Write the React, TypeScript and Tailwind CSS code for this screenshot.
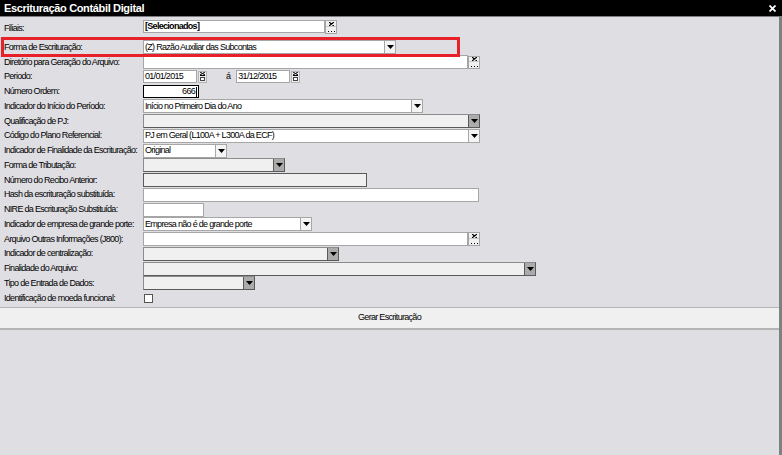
import React from 'react';

const lbl = "text-[9px] tracking-[-0.7px] text-black leading-none whitespace-nowrap";

const Arrow = () => (
  <svg width="7" height="4" viewBox="0 0 7 4">
    <path d="M0 0h7L3.5 4z" fill="#000" />
  </svg>
);

const Row: React.FC<{ label: string; children?: React.ReactNode }> = ({ label, children }) => (
  <div className="flex items-center h-[14.75px]">
    <div className={`w-[143px] pl-[4px] ${lbl}`}>{label}</div>
    <div className="flex items-center">{children}</div>
  </div>
);

const Select: React.FC<{ w: string; value?: string; disabled?: boolean }> = ({ w, value, disabled }) =>
  disabled ? (
    <div className={`flex h-[14px] border border-[#8c8c8c] border-b-[#5a5a5a] border-r-[#5a5a5a] bg-[#f0f0f0] ${w}`}>
      <div className="flex-1" />
      <div className="w-[11px] bg-[#ababab] border-l border-[#5a5a5a] flex items-center justify-center">
        <Arrow />
      </div>
    </div>
  ) : (
    <div className={`flex h-[14px] border border-[#a6a6a6] bg-white ${w}`}>
      <div className={`flex-1 pl-[1px] flex items-center ${lbl}`}>{value}</div>
      <div className="w-[11px] bg-[#f4f4f4] border-l border-[#a6a6a6] flex items-center justify-center">
        <Arrow />
      </div>
    </div>
  );

const Input: React.FC<{ w: string; value?: string; disabled?: boolean }> = ({ w, value, disabled }) => (
  <div
    className={`h-[14px] flex items-center pl-[1px] border ${w} ${
      disabled ? 'bg-[#f0f0f0] border-[#5a5a5a]' : 'bg-white border-[#a6a6a6]'
    } ${lbl}`}
  >
    {value}
  </div>
);

const PickBtn: React.FC<{ h: string }> = ({ h }) => (
  <div className={`w-[12px] ${h} border border-[#a6a6a6] bg-[#f0f0f0] flex flex-col`}>
    <div className="flex-1 flex items-center justify-center border-b border-[#c8c8c8]">
      <svg width="5" height="4" viewBox="0 0 5 4">
        <path d="M0 0l5 4M5 0L0 4" stroke="#000" strokeWidth="1.2" />
      </svg>
    </div>
    <div className="flex-1 flex items-end justify-center pb-[1px]">
      <svg width="7" height="1" viewBox="0 0 7 1">
        <path d="M0 0h1v1H0zM3 0h1v1H3zM6 0h1v1H6z" fill="#000" />
      </svg>
    </div>
  </div>
);

const DateBox: React.FC<{ value: string }> = ({ value }) => (
  <div className="flex items-center">
    <div className={`w-[54px] h-[13px] border border-[#a6a6a6] bg-white flex items-center pl-[1px] ${lbl}`}>{value}</div>
    <div className="w-[9px] h-[12px] ml-[1px] border border-[#b4b4b4] bg-[#ececec] flex flex-col items-center justify-center gap-[1px]">
      <svg width="5" height="4" viewBox="0 0 5 4">
        <path d="M0 0l5 3M5 0L0 3M0 3.5h5" stroke="#000" strokeWidth="1" />
      </svg>
      <svg width="5" height="4" viewBox="0 0 5 4">
        <rect x="0.5" y="0.5" width="4" height="3" fill="#fff" stroke="#444" strokeWidth="1" />
      </svg>
    </div>
  </div>
);

export default function App() {
  return (
    <div className="w-[782px] h-[455px] bg-[#dfdee3] flex flex-col overflow-hidden font-['Liberation_Sans',Arial,sans-serif]">
      <div className="h-[17px] bg-black border-b border-[#7d7d7d] flex items-center justify-between pl-[4px] pr-[6px] shrink-0">
        <span className="text-white font-bold text-[11px] tracking-[-0.35px] leading-none">Escrituração Contábil Digital</span>
        <svg width="7" height="7" viewBox="0 0 7 7">
          <path d="M0.5 0.5l6 6M6.5 0.5l-6 6" stroke="#fff" strokeWidth="1.8" />
        </svg>
      </div>

      <div className="flex-1 border-r-[3px] border-[#808080] relative">
        <div className="pt-[3px]">
          <div className="flex items-start h-[15px]">
            <div className={`w-[143px] pl-[4px] pt-[4px] ${lbl}`}>Filiais:</div>
            <div className={`w-[182px] h-[13px] border border-[#a6a6a6] bg-white flex items-center pl-[1px] font-bold ${lbl} tracking-[-0.4px]`}>
              [Selecionados]
            </div>
            <PickBtn h="h-[14px]" />
          </div>

          <div className="mt-[5px]">
            <Row label="Forma de Escrituração:">
              <Select w="w-[253px]" value="(Z) Razão Auxiliar das Subcontas" />
            </Row>
            <Row label="Diretório para Geração do Arquivo:">
              <Input w="w-[325px]" />
              <PickBtn h="h-[13px]" />
            </Row>
            <Row label="Periodo:">
              <DateBox value="01/01/2015" />
              <span className={`ml-[19px] mr-[6px] ${lbl}`}>á</span>
              <DateBox value="31/12/2015" />
            </Row>
            <Row label="Número Ordem:">
              <div className={`w-[56px] h-[13px] border border-black bg-white flex items-center justify-end pr-[1px] ${lbl}`}>
                666<span className="w-[1px] h-[10px] bg-black ml-[1px]" />
              </div>
            </Row>
            <Row label="Indicador do Início do Período:">
              <Select w="w-[280px]" value="Início no Primeiro Dia do Ano" />
            </Row>
            <Row label="Qualificação de PJ:">
              <Select w="w-[337px]" disabled />
            </Row>
            <Row label="Código do Plano Referencial:">
              <Select w="w-[337px]" value="PJ em Geral (L100A + L300A da ECF)" />
            </Row>
            <Row label="Indicador de Finalidade da Escrituração:">
              <Select w="w-[84px]" value="Original" />
            </Row>
            <Row label="Forma de Tributação:">
              <Select w="w-[142px]" disabled />
            </Row>
            <Row label="Número do Recibo Anterior:">
              <Input w="w-[224px]" disabled />
            </Row>
            <Row label="Hash da escrituração substituída:">
              <Input w="w-[336px]" />
            </Row>
            <Row label="NIRE da Escrituração Substituída:">
              <Input w="w-[61px]" />
            </Row>
            <Row label="Indicador de empresa de grande porte:">
              <Select w="w-[169px]" value="Empresa não é de grande porte" />
            </Row>
            <Row label="Arquivo Outras Informações (J800):">
              <Input w="w-[325px]" />
              <PickBtn h="h-[14px]" />
            </Row>
            <Row label="Indicador de centralização:">
              <Select w="w-[196px]" disabled />
            </Row>
            <Row label="Finalidade do Arquivo:">
              <Select w="w-[393px]" disabled />
            </Row>
            <Row label="Tipo de Entrada de Dados:">
              <Select w="w-[112px]" disabled />
            </Row>
            <Row label="Identificação de moeda funcional:">
              <div className="ml-[1px] w-[9px] h-[9px] border border-[#555] bg-white" />
            </Row>
          </div>
        </div>

        <div className={`mt-[1px] h-[23px] bg-[#f0f0f0] border-t border-b-2 border-[#b4b4b4] flex items-center justify-center ${lbl}`}>
          Gerar Escrituração
        </div>

        <div className="absolute left-[1px] top-[20px] w-[459px] h-[20px] border-[3px] border-[#e8202a]" />
      </div>
    </div>
  );
}
